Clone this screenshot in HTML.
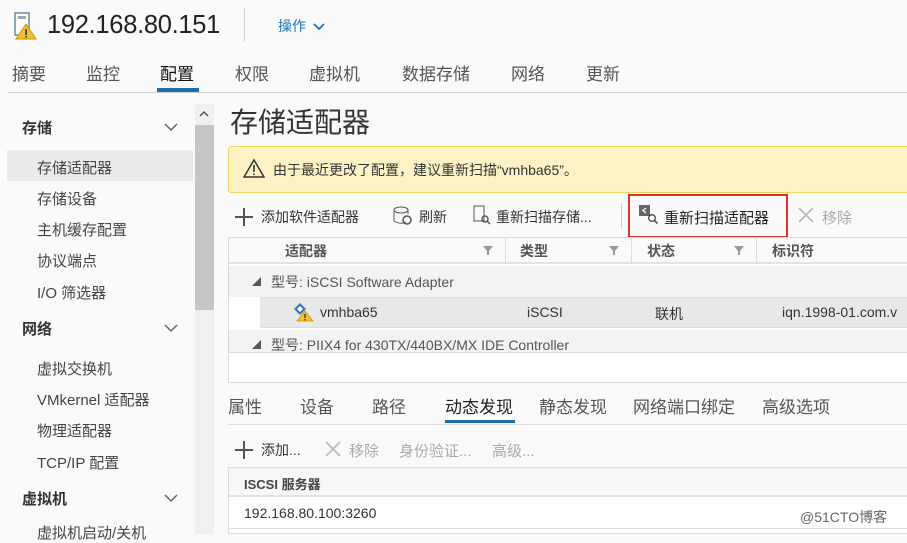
<!DOCTYPE html>
<html><head><meta charset="utf-8"><style>
*{margin:0;padding:0;box-sizing:border-box}
body{width:907px;height:534px;overflow:hidden;background:#fafafa;font-family:"Liberation Sans","Noto Sans CJK SC",sans-serif;color:#333;position:relative}
.a{position:absolute;white-space:nowrap}
.t{font-size:17px;color:#555}
.s{font-size:15px;color:#444}
.g{color:#aaa}
</style></head><body>
<svg class="a" style="left:13px;top:12px" width="24" height="28" viewBox="0 0 24 28"><rect x="2" y="1" width="14" height="22" fill="#fff" stroke="#6a8aa8" stroke-width="1.5"/><rect x="5" y="4" width="8" height="3" fill="#9ab"/><path d="M13 12 L23 27 L3 27 Z" fill="#f6c12b" stroke="#c8960a"/><rect x="12.3" y="17" width="1.6" height="6" fill="#333"/><rect x="12.3" y="24" width="1.6" height="1.6" fill="#333"/></svg>
<div class="a" style="left:47px;top:11px;font-size:25.5px;color:#222;letter-spacing:-0.3px">192.168.80.151</div>
<div class="a" style="left:244px;top:8px;width:1px;height:33px;background:#ccc"></div>
<div class="a" style="left:278px;top:16px;font-size:14px;color:#1b74b8">操作 <svg width="12" height="9" viewBox="0 0 12 9" style="margin-left:3px"><path d="M1 2 L6 7 L11 2" fill="none" stroke="#1b74b8" stroke-width="1.8"/></svg></div>
<div class="a t" style="left:12px;top:60px">摘要</div>
<div class="a t" style="left:86px;top:60px">监控</div>
<div class="a t" style="left:160px;top:60px;color:#111">配置</div>
<div class="a t" style="left:235px;top:60px">权限</div>
<div class="a t" style="left:309px;top:60px">虚拟机</div>
<div class="a t" style="left:402px;top:60px">数据存储</div>
<div class="a t" style="left:511px;top:60px">网络</div>
<div class="a t" style="left:586px;top:60px">更新</div>
<div class="a" style="left:8px;top:92px;width:899px;height:1px;background:#ccc"></div>
<div class="a" style="left:157px;top:88px;width:42px;height:4px;background:#1a6fa8"></div>
<div class="a" style="left:0;top:100px;width:195px;height:434px;background:#fafafa"></div>
<div class="a" style="left:7px;top:150px;width:186px;height:31px;background:#ebebeb"></div>
<div class="a" style="left:22px;top:117px;font-size:15px;font-weight:bold;color:#333">存储</div>
<div class="a" style="left:22px;top:318px;font-size:15px;font-weight:bold;color:#333">网络</div>
<div class="a" style="left:22px;top:488px;font-size:15px;font-weight:bold;color:#333">虚拟机</div>
<svg class="a" style="left:164px;top:123px" width="14" height="9"><path d="M1 1 L7 7 L13 1" fill="none" stroke="#666" stroke-width="1.5"/></svg>
<svg class="a" style="left:164px;top:324px" width="14" height="9"><path d="M1 1 L7 7 L13 1" fill="none" stroke="#666" stroke-width="1.5"/></svg>
<svg class="a" style="left:164px;top:494px" width="14" height="9"><path d="M1 1 L7 7 L13 1" fill="none" stroke="#666" stroke-width="1.5"/></svg>
<div class="a s" style="left:37px;top:157px">存储适配器</div>
<div class="a s" style="left:37px;top:188px">存储设备</div>
<div class="a s" style="left:37px;top:219px">主机缓存配置</div>
<div class="a s" style="left:37px;top:250px">协议端点</div>
<div class="a s" style="left:37px;top:282px">I/O 筛选器</div>
<div class="a s" style="left:37px;top:358px">虚拟交换机</div>
<div class="a s" style="left:37px;top:389px">VMkernel 适配器</div>
<div class="a s" style="left:37px;top:420px">物理适配器</div>
<div class="a s" style="left:37px;top:452px">TCP/IP 配置</div>
<div class="a s" style="left:37px;top:522px">虚拟机启动/关机</div>
<div class="a" style="left:195px;top:104px;width:19px;height:430px;background:#f0f0f0"></div>
<div class="a" style="left:195px;top:125px;width:19px;height:185px;background:#c6c6c6"></div>
<svg class="a" style="left:199px;top:110px" width="10" height="7"><path d="M1 6 L5 2 L9 6" fill="none" stroke="#555" stroke-width="1.5"/></svg>
<div class="a" style="left:230px;top:101px;font-size:28px;color:#333">存储适配器</div>
<div class="a" style="left:228px;top:146px;width:679px;height:47px;background:#fcf2c4;border:1px solid #f0d860;border-right:none;border-radius:3px 0 0 3px"></div>
<svg class="a" style="left:243px;top:158px" width="22" height="20"><path d="M11 2 L21 19 L1 19 Z" fill="none" stroke="#333" stroke-width="1.5"/><rect x="10.2" y="7" width="1.6" height="7" fill="#333"/><rect x="10.2" y="15.5" width="1.6" height="1.6" fill="#333"/></svg>
<div class="a" style="left:273px;top:160px;font-size:14px;color:#333">由于最近更改了配置，建议重新扫描“vmhba65”。</div>
<svg class="a" style="left:234px;top:207px" width="20" height="20"><path d="M10 1 V19 M1 10 H19" stroke="#555" stroke-width="2"/></svg>
<div class="a" style="left:261px;top:207px;font-size:14px;color:#333">添加软件适配器</div>
<svg class="a" style="left:393px;top:206px" width="20" height="20"><ellipse cx="8" cy="4" rx="7" ry="3" fill="none" stroke="#555"/><path d="M1 4 V15 Q8 19 13 16 M15 4 V8" fill="none" stroke="#555"/><circle cx="14" cy="14" r="4" fill="none" stroke="#555" stroke-width="1.5"/></svg>
<div class="a" style="left:419px;top:207px;font-size:14px">刷新</div>
<svg class="a" style="left:473px;top:205px" width="18" height="20"><rect x="1" y="1" width="10" height="15" fill="none" stroke="#555"/><circle cx="12" cy="14" r="3" fill="none" stroke="#555" stroke-width="1.4"/><path d="M14 16 L17 19" stroke="#555" stroke-width="1.5"/></svg>
<div class="a" style="left:496px;top:207px;font-size:14px">重新扫描存储...</div>
<div class="a" style="left:621px;top:204px;width:1px;height:24px;background:#ccc"></div>
<div class="a" style="left:628px;top:194px;width:160px;height:44px;border:2px solid #e03030"></div>
<svg class="a" style="left:639px;top:205px" width="20" height="20"><rect x="0" y="0" width="11" height="11" fill="#666"/><path d="M7 3 L4 5.5 L7 8" fill="none" stroke="#fff" stroke-width="1.4"/><circle cx="13" cy="13" r="3.3" fill="none" stroke="#444" stroke-width="1.3"/><path d="M15.5 15.5 L18.5 18.5" stroke="#444" stroke-width="1.5"/></svg>
<div class="a" style="left:664px;top:207px;font-size:15px;color:#222">重新扫描适配器</div>
<svg class="a" style="left:798px;top:207px" width="16" height="16"><path d="M1 1 L15 15 M15 1 L1 15" stroke="#bbb" stroke-width="1.8"/></svg>
<div class="a g" style="left:822px;top:207px;font-size:15px">移除</div>
<div class="a" style="left:228px;top:237px;width:679px;height:146px;border:1px solid #ddd;border-right:none;background:#fff"></div>
<div class="a" style="left:229px;top:238px;width:678px;height:26px;background:#fafafa;border-bottom:2px solid #e2e2e2"></div>
<div class="a" style="left:505px;top:238px;width:1px;height:26px;background:#ddd"></div>
<div class="a" style="left:631px;top:238px;width:1px;height:26px;background:#ddd"></div>
<div class="a" style="left:756px;top:238px;width:1px;height:26px;background:#ddd"></div>
<div class="a" style="left:285px;top:241px;font-size:14px;font-weight:bold;color:#555">适配器</div>
<div class="a" style="left:520px;top:241px;font-size:14px;font-weight:bold;color:#555">类型</div>
<div class="a" style="left:647px;top:241px;font-size:14px;font-weight:bold;color:#555">状态</div>
<div class="a" style="left:772px;top:241px;font-size:14px;font-weight:bold;color:#555">标识符</div>
<svg class="a" style="left:483px;top:246px" width="10" height="9"><path d="M0 0 H10 L6 5 V9 H4 V5 Z" fill="#999"/></svg>
<svg class="a" style="left:609px;top:246px" width="10" height="9"><path d="M0 0 H10 L6 5 V9 H4 V5 Z" fill="#999"/></svg>
<svg class="a" style="left:734px;top:246px" width="10" height="9"><path d="M0 0 H10 L6 5 V9 H4 V5 Z" fill="#999"/></svg>
<div class="a" style="left:229px;top:266px;width:678px;height:31px;background:#f3f3f3"></div>
<div class="a" style="left:252px;top:275px;font-size:9px;color:#555">◢</div>
<div class="a" style="left:271px;top:272px;font-size:14px;color:#555">型号: iSCSI Software Adapter</div>
<div class="a" style="left:260px;top:297px;width:647px;height:31px;background:#e8e8e8;border-top:1px solid #ddd;border-bottom:1px solid #ddd"></div>
<svg class="a" style="left:292px;top:302px" width="22" height="20"><path d="M2 7 L8 1 L14 7 L8 13 Z" fill="#3a78b5"/><path d="M5 7 L8 4 L11 7 L8 10Z" fill="#fff"/><path d="M13 9 L21 19 L5 19 Z" fill="#f6c12b" stroke="#c8960a" stroke-width=".8"/><rect x="12.3" y="12" width="1.4" height="4" fill="#333"/><rect x="12.3" y="17" width="1.4" height="1.3" fill="#333"/></svg>
<div class="a" style="left:320px;top:304px;font-size:14px;color:#333">vmhba65</div>
<div class="a" style="left:527px;top:304px;font-size:14px;color:#333">iSCSI</div>
<div class="a" style="left:655px;top:304px;font-size:14px;color:#333">联机</div>
<div class="a" style="left:782px;top:304px;font-size:14px;color:#333">iqn.1998-01.com.v</div>
<div class="a" style="left:229px;top:330px;width:678px;height:23px;background:#f3f3f3;border-bottom:1px solid #ddd"></div>
<div class="a" style="left:252px;top:338px;font-size:9px;color:#555">◢</div>
<div class="a" style="left:271px;top:335px;font-size:14px;color:#555">型号: PIIX4 for 430TX/440BX/MX IDE Controller</div>
<div class="a t" style="left:228px;top:393px">属性</div>
<div class="a t" style="left:300px;top:393px">设备</div>
<div class="a t" style="left:372px;top:393px">路径</div>
<div class="a t" style="left:445px;top:393px;color:#222">动态发现</div>
<div class="a t" style="left:539px;top:393px">静态发现</div>
<div class="a t" style="left:633px;top:393px">网络端口绑定</div>
<div class="a t" style="left:762px;top:393px">高级选项</div>
<div class="a" style="left:228px;top:424px;width:679px;height:1px;background:#ddd"></div>
<div class="a" style="left:445px;top:420px;width:70px;height:3px;background:#1a6fa8"></div>
<svg class="a" style="left:234px;top:440px" width="20" height="20"><path d="M10 1 V19 M1 10 H19" stroke="#555" stroke-width="2"/></svg>
<div class="a" style="left:261px;top:440px;font-size:14px;color:#333">添加...</div>
<svg class="a" style="left:325px;top:441px" width="16" height="16"><path d="M1 1 L15 15 M15 1 L1 15" stroke="#bbb" stroke-width="1.8"/></svg>
<div class="a g" style="left:349px;top:440px;font-size:15px">移除</div>
<div class="a g" style="left:399px;top:440px;font-size:15px">身份验证...</div>
<div class="a g" style="left:492px;top:440px;font-size:15px">高级...</div>
<div class="a" style="left:228px;top:467px;width:679px;height:67px;border:1px solid #ddd;border-right:none;background:#fff"></div>
<div class="a" style="left:229px;top:468px;width:678px;height:29px;background:#f7f7f7;border-bottom:2px solid #e2e2e2"></div>
<div class="a" style="left:244px;top:474px;font-size:13px;font-weight:bold;color:#444">ISCSI 服务器</div>
<div class="a" style="left:244px;top:505px;font-size:14px;color:#333">192.168.80.100:3260</div>
<div class="a" style="left:229px;top:528px;width:678px;height:1px;background:#ddd"></div>
<div class="a" style="left:800px;top:507px;font-size:14px;color:#666">@51CTO博客</div>
</body></html>
